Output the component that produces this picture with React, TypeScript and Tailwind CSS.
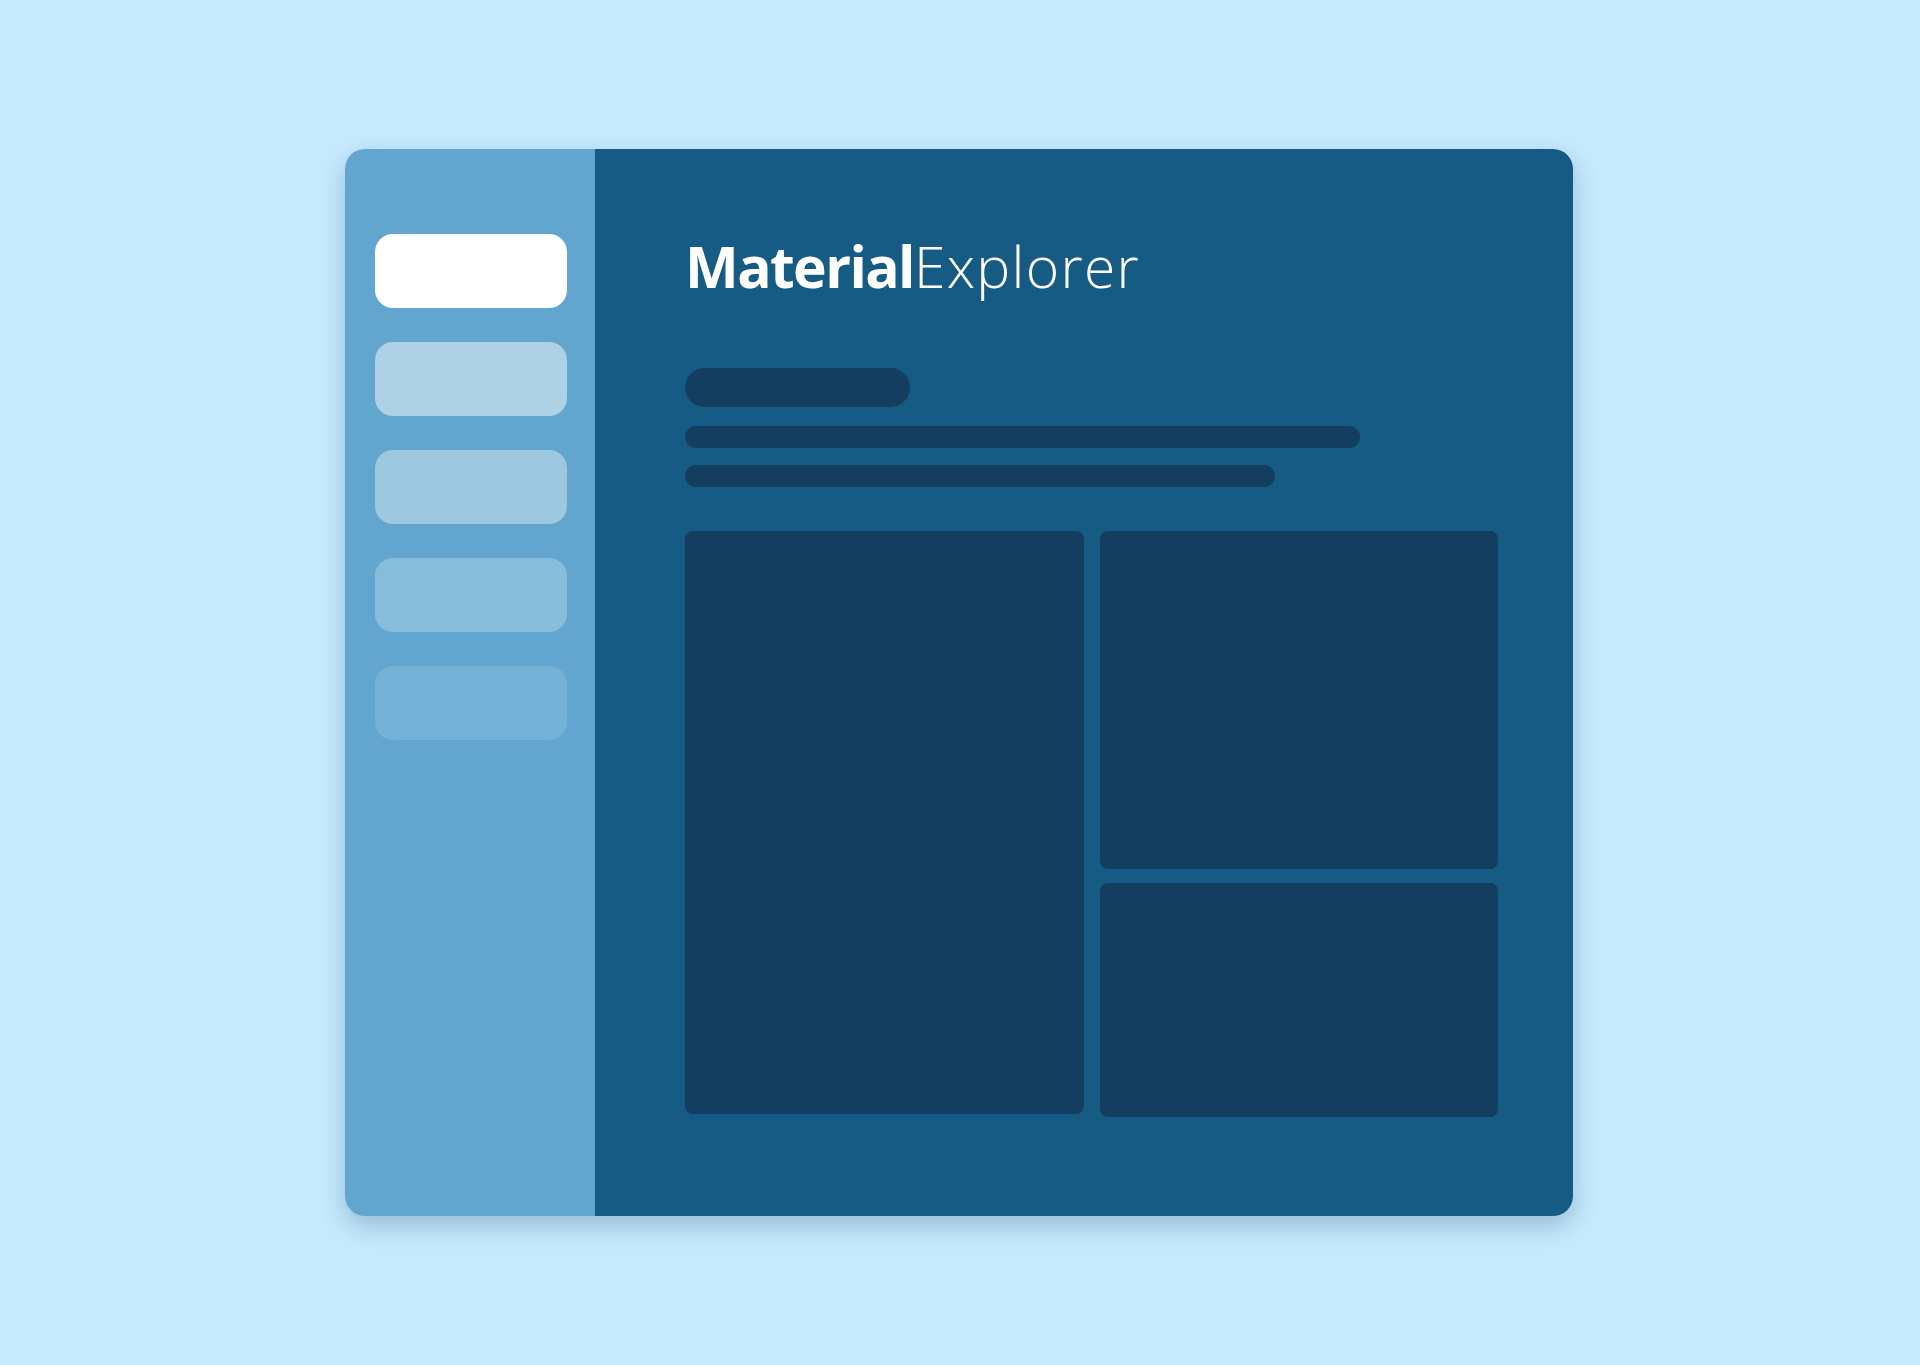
import React from "react";

export default function App() {
  return (
    <div className="w-[1920px] h-[1365px] bg-[#c6e9fd] pt-[149px] pl-[345px]" style={{ fontFamily: "'Open Sans', Lato, sans-serif" }}>
      <div className="flex w-[1228px] h-[1067px] rounded-[20px] overflow-hidden shadow-[0_10px_24px_rgba(40,90,130,0.3)]">
        <aside className="w-[250px] shrink-0 bg-[#62a6cf] pt-[85px] pl-[30px] flex flex-col gap-[34px]">
          <div className="w-[192px] h-[74px] rounded-[18px] bg-white" />
          <div className="w-[192px] h-[74px] rounded-[18px] bg-[#afd1e5]" />
          <div className="w-[192px] h-[74px] rounded-[18px] bg-[#9dc8e0]" />
          <div className="w-[192px] h-[74px] rounded-[18px] bg-[#88bcdb]" />
          <div className="w-[192px] h-[74px] rounded-[18px] bg-[#73b1d6]" />
        </aside>
        <main className="flex-1 bg-[#165b84] pl-[90px] pt-[77px]">
          <h1 className="text-white text-[57px] leading-[80px]">
            <span className="font-bold tracking-[-1.6px]">Material</span>
            <span className="font-light tracking-[1.3px]">Explorer</span>
          </h1>
          <div className="mt-[62px] w-[225px] h-[39px] rounded-full bg-[#143e5f]" />
          <div className="mt-[19px] w-[675px] h-[22px] rounded-full bg-[#143e5f]" />
          <div className="mt-[17px] w-[590px] h-[22px] rounded-full bg-[#143e5f]" />
          <div className="mt-[44px] flex gap-[16px]">
            <div className="w-[399px] h-[583px] rounded-[8px] bg-[#143e5f]" />
            <div className="flex flex-col gap-[14px]">
              <div className="w-[398px] h-[338px] rounded-[8px] bg-[#143e5f]" />
              <div className="w-[398px] h-[234px] rounded-[8px] bg-[#143e5f]" />
            </div>
          </div>
        </main>
      </div>
    </div>
  );
}
